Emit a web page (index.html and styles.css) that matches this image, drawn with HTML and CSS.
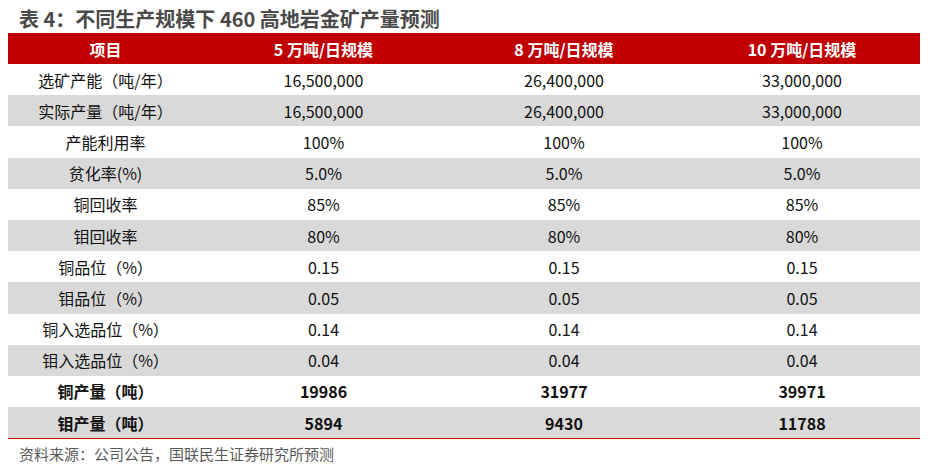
FILE: index.html
```html
<!DOCTYPE html>
<html lang="zh-CN">
<head>
<meta charset="utf-8">
<link rel="stylesheet" href="styles.css">
</head>
<body>
<div class="page">
  <div class="title">表 4：不同生产规模下 460 高地岩金矿产量预测</div>
  <table class="grid">
    <colgroup>
      <col class="c1"><col class="c2"><col class="c3"><col class="c4">
    </colgroup>
    <thead>
      <tr><th>项目</th><th>5 万吨/日规模</th><th>8 万吨/日规模</th><th>10 万吨/日规模</th></tr>
    </thead>
    <tbody>
      <tr><td>选矿产能（吨/年）</td><td>16,500,000</td><td>26,400,000</td><td>33,000,000</td></tr>
      <tr class="alt"><td>实际产量（吨/年）</td><td>16,500,000</td><td>26,400,000</td><td>33,000,000</td></tr>
      <tr><td>产能利用率</td><td>100%</td><td>100%</td><td>100%</td></tr>
      <tr class="alt"><td>贫化率(%)</td><td>5.0%</td><td>5.0%</td><td>5.0%</td></tr>
      <tr><td>铜回收率</td><td>85%</td><td>85%</td><td>85%</td></tr>
      <tr class="alt"><td>钼回收率</td><td>80%</td><td>80%</td><td>80%</td></tr>
      <tr><td>铜品位（%）</td><td>0.15</td><td>0.15</td><td>0.15</td></tr>
      <tr class="alt"><td>钼品位（%）</td><td>0.05</td><td>0.05</td><td>0.05</td></tr>
      <tr><td>铜入选品位（%）</td><td>0.14</td><td>0.14</td><td>0.14</td></tr>
      <tr class="alt"><td>钼入选品位（%）</td><td>0.04</td><td>0.04</td><td>0.04</td></tr>
      <tr class="bold"><td>铜产量（吨）</td><td>19986</td><td>31977</td><td>39971</td></tr>
      <tr class="bold alt last"><td>钼产量（吨）</td><td>5894</td><td>9430</td><td>11788</td></tr>
    </tbody>
  </table>
  <div class="source">资料来源：公司公告，国联民生证券研究所预测</div>
</div>
</body>
</html>
```

FILE: styles.css
```css
html, body {
  margin: 0;
  padding: 0;
  background: #ffffff;
}
body {
  font-family: "Noto Sans CJK SC", "Noto Sans", sans-serif;
  color: #000000;
}
.page {
  width: 942px;
  height: 476px;
  padding-left: 8px;
  box-sizing: border-box;
}
.title {
  height: 33px;
  box-sizing: border-box;
  padding-left: 11px;
  padding-top: 8px;
  font-size: 20px;
  line-height: 22px;
  font-weight: 700;
  color: #4a4a4a;
  white-space: nowrap;
}
.grid {
  width: 912px;
  border-collapse: collapse;
  table-layout: fixed;
}
.c1 { width: 195px; }
.c2 { width: 241px; }
.c3 { width: 240px; }
.c4 { width: 236px; }
.grid th {
  background: #c00000;
  color: #ffffff;
  font-size: 16px;
  font-weight: 700;
  height: 31px;
  padding: 0;
  text-align: center;
  line-height: 20px;
}
.grid td {
  height: 31.2px;
  padding: 0;
  text-align: center;
  font-size: 16px;
  line-height: 20px;
  color: #111111;
  white-space: nowrap;
}
.grid tr.alt td {
  background: #d9d9d9;
}
.grid tr.bold td {
  font-weight: 700;
}
.grid tr.last td {
  border-bottom: 1px solid #c00000;
}
.source {
  padding-left: 11px;
  padding-top: 5px;
  font-size: 15px;
  line-height: 20px;
  color: #595959;
  white-space: nowrap;
}
```
